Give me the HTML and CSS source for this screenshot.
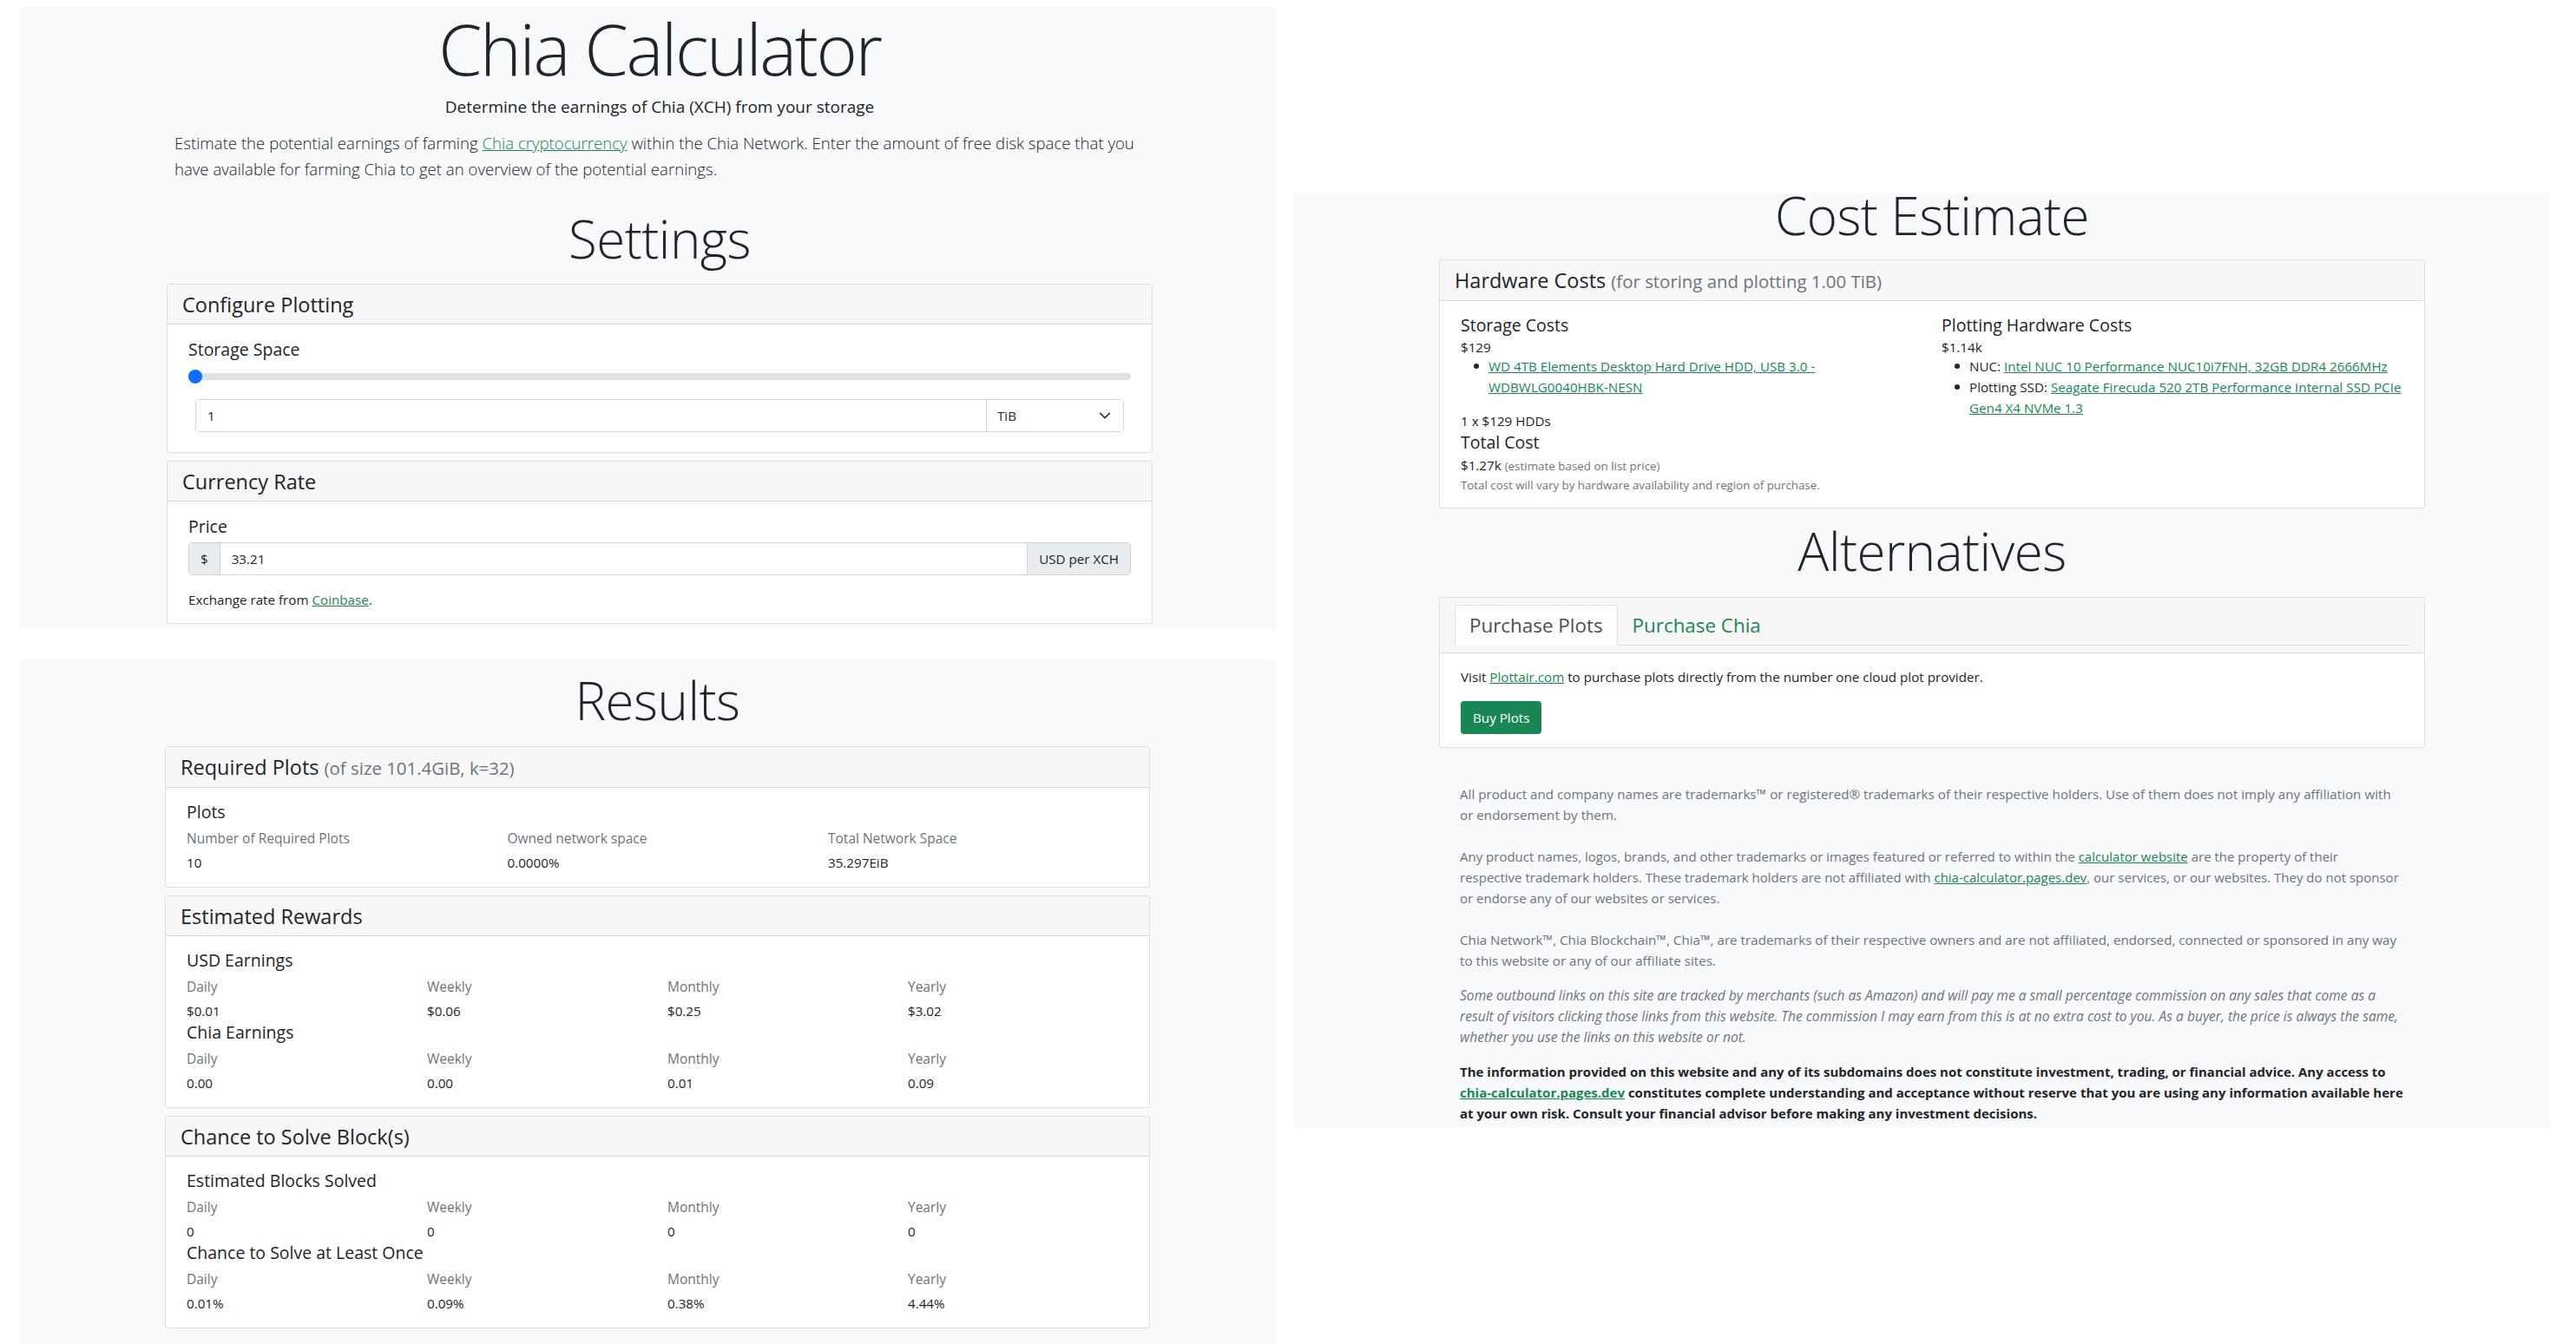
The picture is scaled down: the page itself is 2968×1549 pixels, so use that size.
FILE: index.html
```html
<!DOCTYPE html>
<html lang="en">
<head>
  <meta charset="UTF-8" />
  <meta name="viewport" content="width=device-width, initial-scale=1.0" />
  <title>Chia Calculator</title>
  <link rel="stylesheet" href="styles.css">
</head>
<body>
  <div class="sheet">
    <div class="col-left">
      <section class="panel panel-settings">
        <h1 class="page-title">Chia Calculator</h1>
        <p class="lead">Determine the earnings of Chia (XCH) from your storage</p>
        <p class="intro">Estimate the potential earnings of farming <a href="#">Chia cryptocurrency</a> within the Chia Network. Enter the amount of free disk space that you<br>have available for farming Chia to get an overview of the potential earnings.</p>
        <h2 class="section-title">Settings</h2>

        <div class="card">
          <div class="card-header">Configure Plotting</div>
          <div class="card-body body-plotting">
            <h5 class="card-sub">Storage Space</h5>
            <input class="range" type="range" min="1" max="1000" value="1" />
            <div class="input-group group-inset">
              <input class="field" type="text" value="1" />
              <select class="unit-select"><option>TiB</option></select>
            </div>
          </div>
        </div>

        <div class="card">
          <div class="card-header">Currency Rate</div>
          <div class="card-body body-currency">
            <h5 class="card-sub">Price</h5>
            <div class="input-group group-price">
              <span class="addon addon-start">$</span>
              <input class="field" type="text" value="33.21" />
              <span class="addon addon-end">USD per XCH</span>
            </div>
            <p class="small-note">Exchange rate from <a href="#">Coinbase</a>.</p>
          </div>
        </div>
      </section>

      <section class="panel panel-results">
        <h2 class="section-title">Results</h2>

        <div class="card">
          <div class="card-header">Required Plots <span class="muted-head">(of size 101.4GiB, k=32)</span></div>
          <div class="card-body">
            <h5 class="card-sub">Plots</h5>
            <div class="stats stats-3">
              <div><div class="stat-label">Number of Required Plots</div><div class="stat-value">10</div></div>
              <div><div class="stat-label">Owned network space</div><div class="stat-value">0.0000%</div></div>
              <div><div class="stat-label">Total Network Space</div><div class="stat-value">35.297EiB</div></div>
            </div>
          </div>
        </div>

        <div class="card">
          <div class="card-header">Estimated Rewards</div>
          <div class="card-body">
            <h5 class="card-sub">USD Earnings</h5>
            <div class="stats stats-4">
              <div><div class="stat-label">Daily</div><div class="stat-value">$0.01</div></div>
              <div><div class="stat-label">Weekly</div><div class="stat-value">$0.06</div></div>
              <div><div class="stat-label">Monthly</div><div class="stat-value">$0.25</div></div>
              <div><div class="stat-label">Yearly</div><div class="stat-value">$3.02</div></div>
            </div>
            <h5 class="card-sub">Chia Earnings</h5>
            <div class="stats stats-4">
              <div><div class="stat-label">Daily</div><div class="stat-value">0.00</div></div>
              <div><div class="stat-label">Weekly</div><div class="stat-value">0.00</div></div>
              <div><div class="stat-label">Monthly</div><div class="stat-value">0.01</div></div>
              <div><div class="stat-label">Yearly</div><div class="stat-value">0.09</div></div>
            </div>
          </div>
        </div>

        <div class="card">
          <div class="card-header">Chance to Solve Block(s)</div>
          <div class="card-body">
            <h5 class="card-sub">Estimated Blocks Solved</h5>
            <div class="stats stats-4">
              <div><div class="stat-label">Daily</div><div class="stat-value">0</div></div>
              <div><div class="stat-label">Weekly</div><div class="stat-value">0</div></div>
              <div><div class="stat-label">Monthly</div><div class="stat-value">0</div></div>
              <div><div class="stat-label">Yearly</div><div class="stat-value">0</div></div>
            </div>
            <h5 class="card-sub">Chance to Solve at Least Once</h5>
            <div class="stats stats-4">
              <div><div class="stat-label">Daily</div><div class="stat-value">0.01%</div></div>
              <div><div class="stat-label">Weekly</div><div class="stat-value">0.09%</div></div>
              <div><div class="stat-label">Monthly</div><div class="stat-value">0.38%</div></div>
              <div><div class="stat-label">Yearly</div><div class="stat-value">4.44%</div></div>
            </div>
          </div>
        </div>
      </section>
    </div>

    <div class="col-right">
      <section class="panel panel-costs">
        <h2 class="section-title title-cost">Cost Estimate</h2>

        <div class="card">
          <div class="card-header">Hardware Costs <span class="muted-head">(for storing and plotting 1.00 TiB)</span></div>
          <div class="card-body costs-grid">
            <div>
              <h5 class="card-sub">Storage Costs</h5>
              <div class="price">$129</div>
              <ul class="parts">
                <li><a href="#">WD 4TB Elements Desktop Hard Drive HDD, USB 3.0 -<br>WDBWLG0040HBK-NESN</a></li>
              </ul>
              <div class="hdd-count">1 x $129 HDDs</div>
              <h5 class="card-sub total-head">Total Cost</h5>
              <div class="price price-total">$1.27k <span class="price-hint">(estimate based on list price)</span></div>
              <div class="cost-note">Total cost will vary by hardware availability and region of purchase.</div>
            </div>
            <div>
              <h5 class="card-sub">Plotting Hardware Costs</h5>
              <div class="price">$1.14k</div>
              <ul class="parts">
                <li>NUC: <a href="#">Intel NUC 10 Performance NUC10i7FNH, 32GB DDR4 2666MHz</a></li>
                <li>Plotting SSD: <a href="#">Seagate Firecuda 520 2TB Performance Internal SSD PCIe<br>Gen4 X4 NVMe 1.3</a></li>
              </ul>
            </div>
          </div>
        </div>

        <h2 class="section-title title-alt">Alternatives</h2>

        <div class="card">
          <div class="card-header tabs-header">
            <ul class="tabs">
              <li class="tab tab-active">Purchase Plots</li>
              <li class="tab"><a href="#">Purchase Chia</a></li>
            </ul>
          </div>
          <div class="card-body body-tab">
            <p class="visit">Visit <a href="#">Plottair.com</a> to purchase plots directly from the number one cloud plot provider.</p>
            <a class="btn" href="#">Buy Plots</a>
          </div>
        </div>

        <div class="legal">
          <p class="legal-wide">All product and company names are trademarks™ or registered® trademarks of their respective holders. Use of them does not imply any affiliation with<br>or endorsement by them.</p>
          <p class="legal-wide legal-second">Any product names, logos, brands, and other trademarks or images featured or referred to within the <a href="#">calculator website</a> are the property of their<br>respective trademark holders. These trademark holders are not affiliated with <a href="#">chia-calculator.pages.dev</a>, our services, or our websites. They do not sponsor<br>or endorse any of our websites or services.</p>
          <p>Chia Network™, Chia Blockchain™, Chia™, are trademarks of their respective owners and are not affiliated, endorsed, connected or sponsored in any way<br>to this website or any of our affiliate sites.</p>
          <p class="legal-italic">Some outbound links on this site are tracked by merchants (such as Amazon) and will pay me a small percentage commission on any sales that come as a<br>result of visitors clicking those links from this website. The commission I may earn from this is at no extra cost to you. As a buyer, the price is always the same,<br>whether you use the links on this website or not.</p>
          <p class="legal-bold">The information provided on this website and any of its subdomains does not constitute investment, trading, or financial advice. Any access to<br><a href="#">chia-calculator.pages.dev</a> constitutes complete understanding and acceptance without reserve that you are using any information available here<br>at your own risk. Consult your financial advisor before making any investment decisions.</p>
        </div>
      </section>
    </div>
  </div>
</body>
</html>
```

FILE: styles.css
```css
/* Base */
* { margin: 0; padding: 0; box-sizing: border-box; }
html, body { height: 100%; }
body {
  background: #fff;
  color: #212529;
  font-family: "Open Sans", "Noto Sans", sans-serif;
  font-size: 15.2px;
  line-height: 21px;
  overflow: hidden;
}
a { color: #198754; }

.sheet {
  display: flex;
  align-items: flex-start;
  gap: 20px;
  padding-left: 22px;
}
.col-left, .col-right { width: 1448px; flex: none; }
.col-left { padding-top: 8px; }
.col-right { padding-top: 222px; }

.panel { background: #f8f9fa; }
.panel-settings { padding: 8px 142px 6px 170px; }
.panel-results { margin-top: 36px; padding: 11px 145px 24px 168px; }
.panel-costs { padding: 0 144px 5px 168px; }

/* Headings */
.page-title {
  font-size: 81px;
  font-weight: 300;
  letter-spacing: -2.4px;
  line-height: 80px;
  text-align: center;
}
.section-title {
  font-size: 60px;
  font-weight: 300;
  letter-spacing: -0.5px;
  line-height: 70px;
  text-align: center;
  margin-bottom: 18px;
}
.title-cost { line-height: 52px; margin-bottom: 25px; }
.title-alt { margin-top: 14px; }
.panel-settings .section-title { margin-top: 30px; margin-bottom: 17px; }

.lead {
  font-size: 19px;
  line-height: 24px;
  text-align: center;
  margin-top: 15px;
}
.intro {
  font-size: 18.6px;
  font-weight: 300;
  line-height: 30px;
  margin: 15px 0 0 9px;
  white-space: nowrap;
}

/* Cards */
.card {
  background: #fff;
  border: 1px solid rgba(0,0,0,0.125);
  border-radius: 4px;
  overflow: hidden;
}
.card + .card { margin-top: 9px; }
.card-header {
  background: #f7f7f7;
  border-bottom: 1px solid rgba(0,0,0,0.125);
  font-size: 23.5px;
  font-weight: 500;
  line-height: 43px;
  padding: 2px 17px 0;
}
.muted-head {
  color: #6c757d;
  font-size: 20.4px;
  font-weight: 400;
}
.card-body { padding: 17px 24px 16px; }
.panel-results .card-body { padding: 16px 24px 17px; }
.card-sub {
  font-size: 19.5px;
  font-weight: 500;
  line-height: 24px;
}

/* Form controls */
.body-plotting { padding-bottom: 23px; }
.range {
  -webkit-appearance: none;
  appearance: none;
  display: block;
  width: 100%;
  height: 16px;
  margin-top: 11px;
  background: transparent;
}
.range::-webkit-slider-runnable-track {
  height: 8px;
  background: #dee2e6;
  border-radius: 8px;
}
.range::-webkit-slider-thumb {
  -webkit-appearance: none;
  width: 16px;
  height: 16px;
  margin-top: -4px;
  background: #0d6efd;
  border-radius: 50%;
}
.input-group {
  display: flex;
  height: 38px;
  border: 1px solid #ced4da;
  border-radius: 4px;
  overflow: hidden;
}
.group-inset { margin: 18px 8px 0; }
.group-price { margin-top: 6px; }
.field {
  flex: 1;
  min-width: 0;
  border: none;
  outline: none;
  background: #fff;
  color: #212529;
  font: inherit;
  padding: 0 13px;
}
.unit-select {
  -webkit-appearance: none;
  appearance: none;
  width: 158px;
  border: none;
  border-left: 1px solid #ced4da;
  outline: none;
  color: #212529;
  font: inherit;
  padding-left: 12px;
  background: #fff url("data:image/svg+xml,%3csvg xmlns='http://www.w3.org/2000/svg' viewBox='0 0 16 16'%3e%3cpath fill='none' stroke='%23343a40' stroke-linecap='round' stroke-linejoin='round' stroke-width='2' d='M2 5l6 6 6-6'/%3e%3c/svg%3e") no-repeat right 14px center / 14px 14px;
}
.addon {
  display: flex;
  align-items: center;
  background: #e9ecef;
  color: #212529;
  padding: 0 13px;
}
.addon-start { border-right: 1px solid #ced4da; }
.addon-end { border-left: 1px solid #ced4da; }
.small-note { margin-top: 18px; }

/* Stat rows */
.stats { display: grid; margin: 8px 0 0; }
.stats-3 { grid-template-columns: repeat(3, 369.5px); }
.stats-4 { grid-template-columns: repeat(4, 277px); }
.stat-label { color: #6c757d; font-size: 15.5px; font-weight: 500; margin-bottom: 7px; }
.stats + .card-sub { margin-top: 2px; }

/* Costs */
.costs-grid {
  display: grid;
  grid-template-columns: 554px 1fr;
  padding-top: 16px;
  padding-right: 14px;
}
.price { font-weight: 500; margin-top: 3px; }
.parts { list-style: none; margin-top: -1px; padding-left: 32px; line-height: 24px; white-space: nowrap; }
.parts li { position: relative; }
.parts li::before {
  content: "";
  position: absolute;
  left: -17px;
  top: 9px;
  width: 6px;
  height: 6px;
  border-radius: 50%;
  background: #212529;
}
.hdd-count { margin-top: 17px; }
.total-head { margin-top: 2px; }
.price-total { margin-top: 4px; }
.price-hint { color: #6c757d; font-size: 13.4px; }
.cost-note { color: #6c757d; font-size: 13.3px; line-height: 20px; margin-top: 1px; }

/* Tabs */
.tabs-header { padding: 8px 17px 8px; line-height: normal; font-weight: 400; }
.tabs {
  display: flex;
  list-style: none;
  border-bottom: 1px solid #dee2e6;
  height: 47px;
}
.tab {
  font-size: 22.4px;
  line-height: 45px;
  height: 47px;
  padding: 0 16px;
  border: 1px solid transparent;
  border-bottom: none;
  border-radius: 4px 4px 0 0;
}
.tab a { text-decoration: none; }
.tab-active {
  background: #fff;
  border-color: #dee2e6;
  color: #495057;
}
.body-tab { padding: 17px 24px 15px; }
.btn {
  display: inline-block;
  margin-top: 17px;
  background: #198754;
  color: #fff;
  line-height: 38px;
  padding: 0 14px;
  border-radius: 4px;
  text-decoration: none;
}

/* Legal */
.legal {
  margin-top: 41px;
  padding-left: 24px;
  color: #6c757d;
  line-height: 24px;
  white-space: nowrap;
}
.legal p + p { margin-top: 16px; }
.legal .legal-wide + p { margin-top: 24px; }
.legal-second { font-size: 15px; }
.legal-italic { font-size: 15.6px; font-style: italic; }
.legal-bold { color: #212529; font-size: 15px; font-weight: 700; }
```
